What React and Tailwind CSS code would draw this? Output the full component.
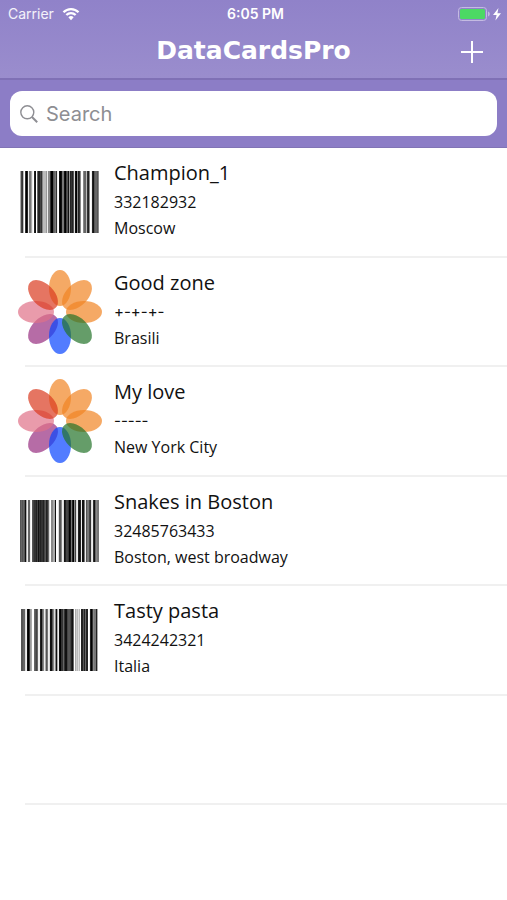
import React from "react";

// One hex digit of grey for each one-pixel column.
const BARCODES = {
  champion: "a43bf302e77aef21f622438bbb9e883005673ef101771045192325d108238ff866b328fe2156658",
  snakes: "565651ae66ef54332413233245236df88aa1ffd558ed124430172084de212e117e57743de316877",
  pasta: "f5566de1039aff6546ee2168ea57ed1158d81ae103363114554216facbdbf2252622fe2038772a",
};

const CARDS = [
  { title: "Champion_1", code: "332182932", place: "Moscow", barcode: "champion" },
  { title: "Good zone", code: "+-+-+-", place: "Brasili" },
  { title: "My love", code: "-----", place: "New York City" },
  { title: "Snakes in Boston", code: "32485763433", place: "Boston, west broadway", barcode: "snakes" },
  { title: "Tasty pasta", code: "3424242321", place: "Italia", barcode: "pasta" },
];

const PETALS = [
  { angle: 0, color: "#f18423" },
  { angle: 45, color: "#f18423" },
  { angle: 90, color: "#f18423" },
  { angle: 225, color: "#972e80" },
  { angle: 270, color: "#e07187" },
  { angle: 315, color: "#da3b20" },
  { angle: 180, color: "#0845ff" },
  { angle: 135, color: "#237429" },
];

function Barcode({ pattern }) {
  return (
    <svg className="h-[62px] w-20" viewBox="0 0 80 62" shapeRendering="crispEdges" aria-hidden="true">
      {pattern.split("").map((shade, i) => (
        <rect key={i} x={i} y="0" width="1" height="62" fill={`#${shade}${shade}${shade}`} />
      ))}
    </svg>
  );
}

function Flower() {
  return (
    <svg className="h-[84px] w-[84px]" viewBox="-42 -42 84 84" aria-hidden="true">
      {PETALS.map(({ angle, color }) => (
        <ellipse
          key={angle}
          cx="0"
          cy="-24"
          rx="11"
          ry="18"
          fill={color}
          fillOpacity="0.7"
          transform={`rotate(${angle})`}
        />
      ))}
      <circle r="6" fill="#fff" />
    </svg>
  );
}

function StatusBar() {
  return (
    <div className="grid h-7 grid-cols-[1fr_auto_1fr] items-center pr-1 pl-2 text-sm">
      <div className="flex items-center gap-2 text-white/90">
        <span>Carrier</span>
        <svg className="h-[14px] w-[18px]" viewBox="0 0 20 16" fill="none" stroke="#fff" strokeWidth="2.6" aria-hidden="true">
          <path d="M1.4 6a12 12 0 0 1 17.2 0M4.7 9.2a7.5 7.5 0 0 1 10.6 0" />
          <path d="M10 15 7 11.8a4.3 4.3 0 0 1 6 0z" fill="#fff" stroke="none" />
        </svg>
      </div>
      <span className="font-semibold">6:05 PM</span>
      <div className="flex items-center justify-end">
        <svg className="h-4 w-12" viewBox="0 0 48 16" aria-hidden="true">
          <rect x="3.5" y="1.5" width="28" height="13" rx="3" fill="none" stroke="#c4bbe2" />
          <rect x="5" y="3" width="25" height="10" rx="1.5" fill="#4cd964" />
          <path d="M33 5.5c2.4.8 2.4 4.2 0 5z" fill="#c4bbe2" />
          <path d="M43.5 2 38 9h3.6l-1.2 5.4L46 7.2h-3.6z" fill="#fff" />
        </svg>
      </div>
    </div>
  );
}

function CardRow({ card }) {
  const codeStyle = card.barcode ? "text-base" : "font-['Inter',sans-serif] text-[15px]";
  return (
    <li className="flex h-[110px] flex-col even:h-[109px]">
      <div className="flex flex-1 pl-[18px]">
        <div className="flex w-[84px] shrink-0 items-center justify-center">
          {card.barcode ? <Barcode pattern={BARCODES[card.barcode]} /> : <Flower />}
        </div>
        <div className="min-w-0 flex-1 pt-[7px] pl-3">
          <h2 className="text-xl leading-9">{card.title}</h2>
          <p className={`${codeStyle} leading-[22px]`}>{card.code}</p>
          <p className="pt-1 text-base leading-[22px]">{card.place}</p>
        </div>
      </div>
      <div className="ml-[25px] h-[2px] bg-[#f0f0f0]" />
    </li>
  );
}

export default function App() {
  return (
    <div className="min-h-screen bg-white font-['Open_Sans',sans-serif] text-[#111]">
      <header className="border-b-2 border-[#7f70b5] bg-linear-to-b from-[#9082c9] to-[#9a8dcd] font-['Inter',sans-serif] text-white">
        <StatusBar />
        <div className="grid h-[50px] grid-cols-[1fr_auto_1fr] items-start">
          <h1 className="col-start-2 font-['DejaVu_Sans',sans-serif] text-[25px] leading-[46px] font-bold">
            DataCardsPro
          </h1>
          <button type="button" aria-label="Add card" className="mr-6 flex h-12 items-center justify-self-end">
            <svg className="h-[22px] w-[22px]" viewBox="0 0 22 22" stroke="#fff" strokeWidth="2" aria-hidden="true">
              <path d="M11 0v22M0 11h22" />
            </svg>
          </button>
        </div>
      </header>
      <form
        role="search"
        className="border-b border-[#8174b5] bg-[#8c7dc6] px-[10px] py-[11px] font-['Inter',sans-serif]"
        onSubmit={(e) => e.preventDefault()}
      >
        <label className="flex h-[45px] items-center gap-2 rounded-xl bg-white px-[10px]">
          <svg className="h-[18px] w-[18px] shrink-0" viewBox="0 0 18 18" fill="none" stroke="#8e8e93" aria-hidden="true">
            <circle cx="7.3" cy="7.3" r="6.5" strokeWidth="1.4" />
            <path d="m12 12 5.2 5.2" strokeWidth="2" />
          </svg>
          <input
            type="search"
            aria-label="Search"
            placeholder="Search"
            className="min-w-0 flex-1 bg-transparent text-xl outline-none placeholder:text-[#8e8e93]"
          />
        </label>
      </form>
      <ul>
        {CARDS.map((card) => (
          <CardRow key={card.title} card={card} />
        ))}
        <li className="flex h-[109px] flex-col justify-end">
          <div className="ml-[25px] h-[2px] bg-[#f0f0f0]" />
        </li>
      </ul>
    </div>
  );
}
